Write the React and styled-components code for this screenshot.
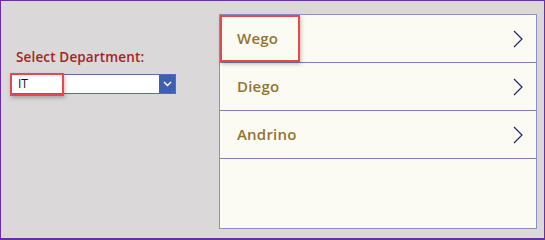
import styled, { createGlobalStyle } from "styled-components";

const Global = createGlobalStyle`
  html, body { margin: 0; padding: 0; }
  body { font-family: "Open Sans", "Noto Sans", sans-serif; }
`;

const Screen = styled.div`
  width: 545px;
  height: 240px;
  box-sizing: border-box;
  border: 1px solid #6b2fa0;
  border-bottom-width: 2px;
  background: #dad8d8;
  display: flex;
  padding: 13px 7px 10px 9px;
`;

const Side = styled.div`
  width: 209px;
  padding-top: 33px;
  display: flex;
  flex-direction: column;
`;

const Label = styled.div`
  font-size: 13.5px;
  font-weight: 600;
  color: #a3241f;
  padding-left: 6px;
  letter-spacing: 0.15px;
  line-height: 20px;
`;

const Dropdown = styled.div`
  position: relative;
  margin-top: 7px;
  width: 166px;
  height: 20px;
  box-sizing: border-box;
  border: 1px solid #5b6ab5;
  background: #fff;
  display: flex;
`;

const Value = styled.div`
  flex: 1;
  font-size: 12px;
  line-height: 18px;
  color: #111;
  padding-left: 7px;
`;

const Arrow = styled.div`
  width: 16px;
  background: #3f5fb4;
  display: flex;
  align-items: center;
  justify-content: center;
`;

const Highlight = styled.div`
  position: absolute;
  left: ${(p) => p.$left}px;
  top: ${(p) => p.$top}px;
  width: ${(p) => p.$w}px;
  height: ${(p) => p.$h}px;
  border: 2px solid #e8474c;
  box-sizing: border-box;
  box-shadow: 1px 2px 4px rgba(0, 0, 0, 0.25);
  pointer-events: none;
`;

const Gallery = styled.div`
  width: 318px;
  height: 215px;
  box-sizing: border-box;
  border: 1px solid #8a8fc6;
  background: #fbfaf3;
  display: flex;
  flex-direction: column;
`;

const Row = styled.div`
  position: relative;
  height: 48px;
  box-sizing: border-box;
  border-bottom: 1px solid #7b80b9;
  display: flex;
  align-items: center;
  justify-content: space-between;
  padding: 0 13px 0 17px;
  flex-shrink: 0;
`;

const Name = styled.span`
  font-size: 15px;
  font-weight: 600;
  color: #917535;
  letter-spacing: 0.2px;
  margin-top: -2px;
`;

const Chevron = () => (
  <svg width="10" height="18" viewBox="0 0 10 18">
    <path d="M1 1 L9 9 L1 17" fill="none" stroke="#1d2470" strokeWidth="1.2" />
  </svg>
);

const names = ["Wego", "Diego", "Andrino"];

export default function App() {
  return (
    <>
      <Global />
      <Screen>
        <Side>
          <Label>Select Department:</Label>
          <Dropdown>
            <Value>IT</Value>
            <Arrow>
              <svg width="9" height="6" viewBox="0 0 9 6">
                <path d="M1 1 L4.5 4.5 L8 1" fill="none" stroke="#fff" strokeWidth="1.4" />
              </svg>
            </Arrow>
            <Highlight $left={-1} $top={-2} $w={54} $h={23} />
          </Dropdown>
        </Side>
        <Gallery>
          {names.map((n, i) => (
            <Row key={n}>
              <Name>{n}</Name>
              <Chevron />
              {i === 0 && <Highlight $left={0} $top={0} $w={80} $h={47} />}
            </Row>
          ))}
        </Gallery>
      </Screen>
    </>
  );
}
